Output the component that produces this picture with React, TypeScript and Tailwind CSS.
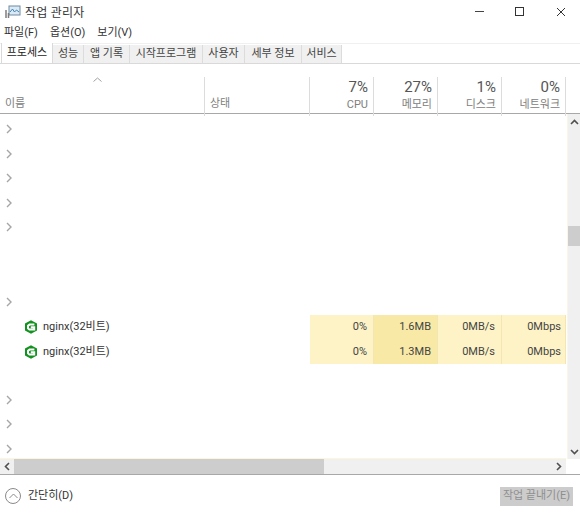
import React from "react";

const tabs = [
  { label: "프로세스", width: "w-[52px]", active: true },
  { label: "성능", width: "w-[31px]" },
  { label: "앱 기록", width: "w-[46px]" },
  { label: "시작프로그램", width: "w-[73px]" },
  { label: "사용자", width: "w-[42px]" },
  { label: "세부 정보", width: "w-[57px]" },
  { label: "서비스", width: "w-[40px]" },
];

const usage = [
  { pct: "7%", label: "CPU" },
  { pct: "27%", label: "메모리" },
  { pct: "1%", label: "디스크" },
  { pct: "0%", label: "네트워크" },
];

const rowClass = "grid grid-cols-[205px_105px_64px_64px_64px_64px] h-[24.5px] items-center";

function Chevron() {
  return (
    <svg width="7" height="10" viewBox="0 0 7 10" className="ml-[6px]">
      <path d="M1 1l4 4-4 4" fill="none" stroke="#a6a6a6" strokeWidth="1.4" />
    </svg>
  );
}

function NginxIcon() {
  return (
    <svg width="14" height="14" viewBox="0 0 14 14">
      <path d="M7 .2L13 3.6V10.4L7 13.8 1 10.4V3.6z" fill="#12921f" />
      <path d="M10.4 4.6H5.6L4 5.8V8.4L5.4 9.6H10.2V7.2H6.8" fill="none" stroke="#fff" strokeWidth="2" />
    </svg>
  );
}

function EmptyRows({ count }: { count: number }) {
  return (
    <>
      {Array.from({ length: count }).map((_, i) => (
        <div key={i} className={rowClass}>
          <Chevron />
        </div>
      ))}
    </>
  );
}

function NginxRow({ mem }: { mem: string }) {
  return (
    <div className={rowClass}>
      <div className="flex items-center gap-[5px] pl-[24px] text-[#333]">
        <NginxIcon />
        <span className="text-[11px]">nginx(32비트)</span>
      </div>
      <div />
      <div className="flex h-full items-center justify-end pr-[6px] bg-[#fdf3c6] border-r border-[#f3e6b4]">0%</div>
      <div className="flex h-full items-center justify-end pr-[6px] bg-[#f9e9a6] border-r border-[#f3e6b4]">{mem}</div>
      <div className="flex h-full items-center justify-end pr-[6px] bg-[#fdf3c6] border-r border-[#f3e6b4]">0MB/s</div>
      <div className="flex h-full items-center justify-end pr-[4px] bg-[#fdf3c6] border-r border-[#f3e6b4]">0Mbps</div>
    </div>
  );
}

export default function App() {
  return (
    <div className="w-[580px] h-[517px] flex flex-col overflow-hidden bg-white text-[11px] text-[#444] font-['Roboto','Noto_Sans_CJK_KR',sans-serif]">
      <div className="h-[21px] mt-[1px] flex items-center pl-[5px] shrink-0">
        <svg width="16" height="14" viewBox="0 0 16 14" className="mt-[1px]">
          <rect x="4" y="1" width="11" height="9" fill="#dbe9f4" stroke="#6f8aa0" />
          <path d="M5 7l2.5-3 2 3 2-2 2.5 2" fill="none" stroke="#3f85b8" />
          <path d="M1 5v8M3.5 8v5" stroke="#7d7d7d" strokeWidth="1.5" />
        </svg>
        <span className="ml-[4px] mt-[2px] text-[12px] tracking-[0.2px] text-[#333]">작업 관리자</span>
        <div className="ml-auto flex items-center text-[#333]">
          <span className="w-[9px] h-[1px] bg-[#444] mr-[31px]" />
          <span className="w-[9px] h-[9px] border border-[#333] mr-[32px]" />
          <svg width="10" height="10" viewBox="0 0 10 10" className="mr-[14px]">
            <path d="M1 1l8 8M9 1l-8 8" stroke="#333" strokeWidth="1" />
          </svg>
        </div>
      </div>

      <div className="h-[21px] pt-[2px] flex items-center gap-[12px] pl-[4px] shrink-0 text-[#333]">
        <span>파일(F)</span>
        <span>옵션(O)</span>
        <span>보기(V)</span>
      </div>

      <div className="h-[21px] flex items-end pl-[1px] border-t border-b border-t-[#f0f0f0] border-b-[#d9d9d9] shrink-0">
        {tabs.map((t) => (
          <div
            key={t.label}
            className={
              t.active
                ? `${t.width} h-[20px] pt-[1px] flex items-center justify-center bg-white text-[#222] border-x border-[#d9d9d9]`
                : `${t.width} h-[18px] pt-[1px] flex items-center justify-center bg-[#f0f0f0] border-r border-[#dcdcdc] text-[#444]`
            }
          >
            {t.label}
          </div>
        ))}
      </div>

      <div className="h-[50px] grid grid-cols-[205px_105px_64px_64px_64px_64px] border-b border-[#a8a8a8] shrink-0 text-[#808080]">
        <div className="relative flex items-end pl-[5px] pb-[4px] border-r border-r-[#dcdcdc] mt-[13px]">
          <svg width="9" height="5" viewBox="0 0 9 5" className="absolute left-[93px] top-[0px]">
            <path d="M.5 4.5l4-3.5 4 3.5" fill="none" stroke="#a0a0a0" />
          </svg>
          이름
        </div>
        <div className="flex items-end pl-[5px] pb-[4px] border-r border-[#dcdcdc] mt-[13px]">상태</div>
        {usage.map((u) => (
          <div key={u.label} className="flex flex-col items-end justify-end pr-[5px] pb-[3px] border-r border-[#dcdcdc] mt-[13px]">
            <span className="text-[15px] leading-[20px] text-[#555]">{u.pct}</span>
            <span className="leading-[16px]">{u.label}</span>
          </div>
        ))}
      </div>

      <div className="flex-1 flex min-h-0">
        <div className="w-[566px] pt-[3px] border-b border-[#fcf6df]">
          <EmptyRows count={5} />
          <div className="h-[50px]" />
          <EmptyRows count={1} />
          <div className="h-[1px]" />
          <NginxRow mem="1.6MB" />
          <NginxRow mem="1.3MB" />
          <div className="h-[23.5px]" />
          <EmptyRows count={3} />
        </div>
        <div className="ml-auto w-[13px] flex flex-col bg-[#f0f0f0] border-l border-[#faf6e6]">
          <div className="h-[15px] flex items-center justify-center">
            <svg width="9" height="6" viewBox="0 0 9 6">
              <path d="M1 5l3.5-3.5L8 5" fill="none" stroke="#505050" strokeWidth="1.6" />
            </svg>
          </div>
          <div className="h-[20px] mt-[97px] bg-[#cdcdcd]" />
          <div className="mt-auto h-[15px] flex items-center justify-center">
            <svg width="9" height="6" viewBox="0 0 9 6">
              <path d="M1 1l3.5 3.5L8 1" fill="none" stroke="#505050" strokeWidth="1.6" />
            </svg>
          </div>
        </div>
      </div>

      <div className="h-[15px] flex shrink-0 border-b-0">
        <div className="w-[566px] flex bg-[#f0f0f0]">
          <div className="w-[14px] flex items-center justify-center">
            <svg width="6" height="9" viewBox="0 0 6 9">
              <path d="M5 1L1.5 4.5 5 8" fill="none" stroke="#505050" strokeWidth="1.6" />
            </svg>
          </div>
          <div className="w-[310px] bg-[#cdcdcd]" />
          <div className="ml-auto w-[14px] flex items-center justify-center">
            <svg width="6" height="9" viewBox="0 0 6 9">
              <path d="M1 1l3.5 3.5L1 8" fill="none" stroke="#505050" strokeWidth="1.6" />
            </svg>
          </div>
        </div>
      </div>

      <div className="h-[43px] shrink-0 flex items-center border-t border-[#a8a8a8] pl-[5px] pr-[7px]">
        <div className="w-[16px] h-[16px] rounded-full border border-[#8a8a8a] flex items-center justify-center">
          <svg width="9" height="6" viewBox="0 0 9 6">
            <path d="M.5 5l4-4 4 4" fill="none" stroke="#8a8a8a" />
          </svg>
        </div>
        <span className="ml-[7px] text-[#333]">간단히(D)</span>
        <div className="ml-auto w-[73px] h-[19px] bg-[#cccccc] flex items-center justify-center text-[#8f8f8f] whitespace-nowrap">
          작업 끝내기(E)
        </div>
      </div>
    </div>
  );
}
